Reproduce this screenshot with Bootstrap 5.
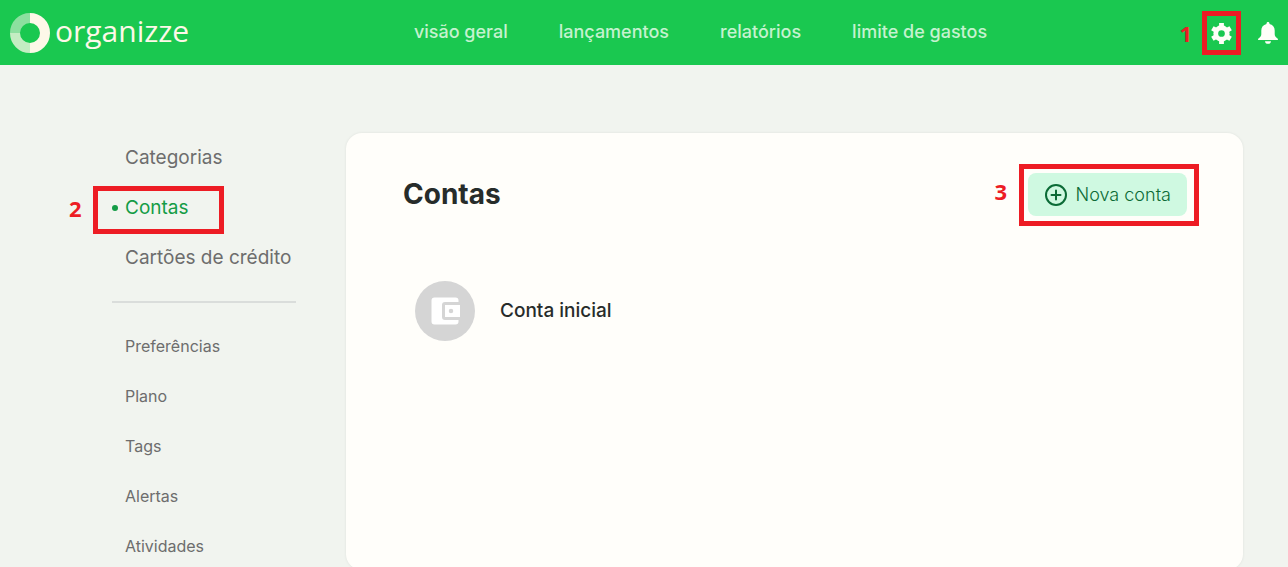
<!DOCTYPE html>
<html lang="pt-BR">
<head>
<meta charset="utf-8">
<meta name="viewport" content="width=device-width, initial-scale=1">
<title>Organizze - Contas</title>
<link rel="stylesheet" href="https://cdn.jsdelivr.net/npm/bootstrap@5.3.0/dist/css/bootstrap.min.css">
<style>
  body { background: #f1f4ef; font-family: Inter, sans-serif; color: #272c2a; }
  .topbar { background: #1ac850; height: 65px; padding: 0 10px; }
  .logo { color: #fdf8e8; font: 30px/40px "Open Sans", sans-serif; gap: 5px; text-decoration: none; width: 306px; }
  .logo span { padding-bottom: 4px; }
  .main-links { gap: 51px; }
  .main-links a { color: #c5f2cf; font-size: 18px; font-weight: 500; line-height: 28px; padding-bottom: 2px; text-decoration: none; }
  .tools { width: 193px; gap: 25px; }
  .icon-btn { background: none; border: 0; padding: 0; line-height: 0; color: #fffef8; }
  .page { padding: 68px 45px 0 112px; gap: 50px; }
  .sidebar { width: 184px; }
  .sidebar a { display: block; line-height: 50px; padding-left: 13px; color: #6d6d6d; text-decoration: none; white-space: nowrap; }
  .sidebar .main-set a { font-size: 19px; }
  .sidebar .more-set a { font-size: 16px; }
  .sidebar a.current { color: #149c46; }
  .current::before { content: ""; position: absolute; left: 0; top: 22px; width: 6px; height: 6px; border-radius: 50%; background: #149c46; }
  .sidebar hr { margin: 18px 0; border-top: 2px solid #dadddb; opacity: 1; }
  .panel { background: #fffefa; border-radius: 16px; box-shadow: 0 0 3px rgba(0,0,0,.08); min-height: 437px; padding: 40px 56px 40px 57px; }
  .panel h1 { font-size: 28px; line-height: 42px; font-weight: 700; }
  .add-btn { background: #cff9e1; color: #0b6b36; border: 0; border-radius: 8px; height: 43px; padding: 0 16px; gap: 8px; font-size: 18px; font-weight: 300; }
  .account { padding: 65px 12px 0; gap: 25px; font-size: 19px; font-weight: 500; }
  .avatar { width: 60px; height: 60px; border-radius: 50%; background: #d5d5d5; }
  .marked::after { content: ""; position: absolute; border: 5px solid #ed1c24; pointer-events: none; }
  .mark-gear::after { inset: -9px -8px -10px; }
  .mark-menu::after { inset: 3px auto auto -19px; width: 131px; height: 48px; }
  .mark-add::after { inset: -9px -12px -10px -9px; }
  .step { position: absolute; top: 50%; translate: 0 -50%; color: #ed1c24; font: 700 22px/24px "Open Sans", sans-serif; }
  .mark-gear .step { right: 41px; }
  .mark-menu .step { left: -43px; }
  .mark-add .step { right: 180px; margin-top: -4px; }
</style>
</head>
<body>
<header class="topbar d-flex align-items-center justify-content-between">
  <a href="#" class="logo d-flex align-items-center">
    <svg width="40" height="40" viewBox="0 0 40 40" fill="none" stroke-width="10" aria-hidden="true">
      <path d="M20 5a15 15 0 0 1 0 30" stroke="#fdf8e8"/>
      <path d="M20 35a15 15 0 0 1-15-15" stroke="#c4edc2"/>
      <path d="M5 20a15 15 0 0 1 15-15" stroke="#8ce09f"/>
    </svg>
    <span>organizze</span>
  </a>
  <nav class="main-links d-flex" aria-label="Principal">
    <a href="#">visão geral</a>
    <a href="#">lançamentos</a>
    <a href="#">relatórios</a>
    <a href="#">limite de gastos</a>
  </nav>
  <div class="tools d-flex justify-content-end align-items-center">
    <div class="marked mark-gear position-relative">
      <span class="step">1</span>
      <button class="icon-btn" type="button" aria-label="Configurações">
        <svg width="23" height="23" viewBox="-12 -12 24 24" aria-hidden="true">
          <g fill="none" stroke="currentColor" stroke-linecap="square">
            <circle r="6" stroke-width="5"/>
            <g stroke-width="5">
              <path d="M0-8.500V-7M0 8.500V7"/>
              <path d="M0-8.500V-7M0 8.500V7" transform="rotate(60)"/>
              <path d="M0-8.500V-7M0 8.500V7" transform="rotate(120)"/>
            </g>
          </g>
        </svg>
      </button>
    </div>
    <button class="icon-btn" type="button" aria-label="Notificações">
      <svg width="20" height="22" viewBox="0 0 20 22" fill="currentColor"><path d="M10 0c-.9 0-1.500.6-1.500 1.500v.4C5.200 2.600 3.300 5.300 3.300 8.600V12c0 1.700-.7 2.700-2.500 4.200-.5.400-.8.700-.8 1.200 0 .4.300.6.700.6h18.600c.4 0 .7-.2.7-.6 0-.5-.3-.8-.8-1.200-1.800-1.500-2.500-2.500-2.500-4.200V8.600c0-3.300-1.900-6-5.200-6.700v-.4C11.500.6 10.900 0 10 0zM7 19.200h6c0 1.600-1.300 2.600-3 2.600s-3-1-3-2.600z"/></svg>
    </button>
  </div>
</header>

<div class="page d-flex align-items-start">
  <nav class="sidebar flex-shrink-0" aria-label="Configurações">
    <div class="main-set">
      <a href="#">Categorias</a>
      <div class="marked mark-menu position-relative">
        <span class="step">2</span>
        <a href="#" class="current" aria-current="page">Contas</a>
      </div>
      <a href="#">Cartões de crédito</a>
    </div>
    <hr>
    <div class="more-set">
      <a href="#">Preferências</a>
      <a href="#">Plano</a>
      <a href="#">Tags</a>
      <a href="#">Alertas</a>
      <a href="#">Atividades</a>
    </div>
  </nav>
  <main class="panel flex-grow-1">
    <div class="d-flex justify-content-between">
      <h1 class="m-0">Contas</h1>
      <div class="marked mark-add position-relative">
        <span class="step">3</span>
        <button class="add-btn d-flex align-items-center" type="button">
          <svg width="24" height="24" viewBox="0 0 24 24" fill="none" stroke="currentColor" stroke-width="2" stroke-linecap="round" aria-hidden="true"><circle cx="12" cy="12" r="10"/><path d="M12 7.500v9M7.500 12h9"/></svg>
          Nova conta
        </button>
      </div>
    </div>
    <div class="account d-flex align-items-center">
      <span class="avatar d-flex align-items-center justify-content-center">
        <svg width="36" height="36" viewBox="0 0 24 24" fill="#fff" aria-hidden="true"><path d="M21 18v1a2 2 0 0 1-2 2H5a2 2 0 0 1-2-2V5a2 2 0 0 1 2-2h14a2 2 0 0 1 2 2v1h-9a2 2 0 0 0-2 2v8a2 2 0 0 0 2 2zm-9-2h10V8H12zm4-2.500a1.500 1.500 0 1 1 0-3 1.500 1.500 0 0 1 0 3z"/></svg>
      </span>
      <span>Conta inicial</span>
    </div>
  </main>
</div>
<script src="https://cdn.jsdelivr.net/npm/bootstrap@5.3.0/dist/js/bootstrap.bundle.min.js"></script>
</body>
</html>
